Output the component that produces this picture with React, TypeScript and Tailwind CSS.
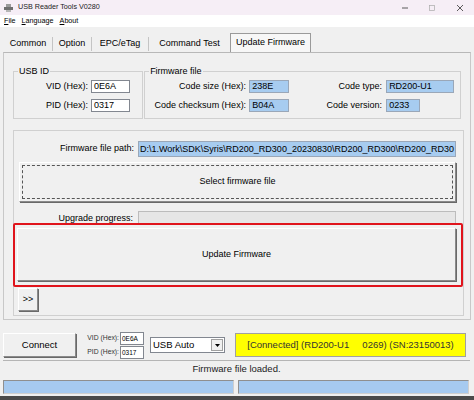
import React from 'react';

const field = 'h-[13px] border border-[#828790] bg-white px-[2px] text-[9px] leading-[11px] whitespace-nowrap overflow-hidden';
const blueField = 'h-[13px] border border-[#9aa7b8] bg-[#a7ccf0] px-[2px] text-[9px] leading-[11px] whitespace-nowrap overflow-hidden';
const winButton = 'flex items-center justify-center bg-[#f0f0f0] border border-t-white border-l-white border-r-[#8a8a8a] border-b-[#8a8a8a] shadow-[1px_1px_0_#696969]';

function Tab({ label, width }: { label: string; width: string }) {
  return (
    <div className={`${width} flex h-[14px] items-center justify-center border-r border-[#c4c4c4]`}>
      {label}
    </div>
  );
}

export default function App() {
  return (
    <div className="flex h-[400px] w-[474px] flex-col overflow-hidden bg-[#f0f0f0] font-['Liberation_Sans',Arial,sans-serif] text-[9px] text-black">
      {/* title bar */}
      <div className="flex h-[15px] items-center bg-[#f6eef6]">
        <svg className="ml-[4px] mr-[5px]" width="9" height="8" viewBox="0 0 9 8">
          <rect x="2" y="0" width="5" height="3" fill="#9a9a9a" />
          <rect x="0" y="3" width="9" height="3" fill="#6f6f6f" />
          <rect x="2" y="6" width="5" height="2" fill="#b5b5b5" />
        </svg>
        <span className="text-[7.2px] text-[#222]">USB Reader Tools V0280</span>
        <div className="flex-1" />
        <svg className="mr-[21px]" width="6" height="6" viewBox="0 0 6 6">
          <line x1="0" y1="3" x2="6" y2="3" stroke="#333" strokeWidth="0.8" />
        </svg>
        <svg className="mr-[22px]" width="6" height="6" viewBox="0 0 6 6">
          <rect x="0.5" y="0.5" width="5" height="5" fill="none" stroke="#aaa" strokeWidth="0.7" />
        </svg>
        <svg className="mr-[11px]" width="6" height="6" viewBox="0 0 6 6">
          <path d="M0 0 L6 6 M6 0 L0 6" stroke="#333" strokeWidth="0.8" />
        </svg>
      </div>

      {/* menu */}
      <div className="flex h-[12px] items-center gap-[6px] bg-white pl-[4px] text-[7.2px]">
        <span><u>F</u>ile</span>
        <span><u>L</u>anguage</span>
        <span><u>A</u>bout</span>
      </div>

      {/* tab strip */}
      <div className="mt-[6px] flex h-[19px] items-end pl-[4px]">
        <div className="flex h-[17px] items-center">
          <Tab label="Common" width="w-[49px]" />
          <Tab label="Option" width="w-[39px]" />
          <Tab label="EPC/eTag" width="w-[57px]" />
          <div className="flex h-full w-[81px] items-center justify-center">Command Test</div>
        </div>
        <div className="flex h-[19px] w-[81px] items-center justify-center border border-b-0 border-[#9a9a9a] bg-[#f7f7f7] text-[9px]">
          Update Firmware
        </div>
      </div>

      {/* tab page */}
      <div className="mx-[3px] h-[268px] w-[468px] border border-[#c8c8c8] border-t-[#b8b8b8] px-[9px] pt-[13px]">
        <div className="flex gap-[1px]">
          <fieldset className="h-[53px] w-[131px] border border-[#d0d0d0] px-0">
            <legend className="ml-[4px] px-[1px] leading-[11px]">USB ID</legend>
            <div className="mt-[3px] flex items-center">
              <span className="w-[77px] pr-[3px] text-right">VID (Hex):</span>
              <div className={`${field} w-[39px]`}>0E6A</div>
            </div>
            <div className="mt-[5px] flex items-center">
              <span className="w-[77px] pr-[3px] text-right">PID (Hex):</span>
              <div className={`${field} w-[39px]`}>0317</div>
            </div>
          </fieldset>
          <fieldset className="h-[53px] w-[319px] border border-[#d0d0d0] px-0">
            <legend className="ml-[4px] px-[1px] leading-[11px]">Firmware file</legend>
            <div className="mt-[3px] flex items-center">
              <span className="w-[104px] pr-[3px] text-right">Code size (Hex):</span>
              <div className={`${blueField} w-[40px]`}>238E</div>
              <span className="w-[97px] pr-[4px] text-right">Code type:</span>
              <div className={`${blueField} w-[68px]`}>RD200-U1</div>
            </div>
            <div className="mt-[5px] flex items-center">
              <span className="w-[104px] pr-[3px] text-right">Code checksum (Hex):</span>
              <div className={`${blueField} w-[40px]`}>B04A</div>
              <span className="w-[97px] pr-[4px] text-right">Code version:</span>
              <div className={`${blueField} w-[34px]`}>0233</div>
            </div>
          </fieldset>
        </div>

        <div className="relative mt-[11px] h-[186px] w-[451px] border border-[#d0d0d0] pt-[10px]">
          <div className="flex items-center">
            <span className="w-[124px] pr-[4px] text-right">Firmware file path:</span>
            <div className="h-[16px] w-[318px] overflow-hidden whitespace-nowrap border border-[#9aa7b8] bg-[#a7ccf0] px-[1px] leading-[14px]">
              D:\1.Work\SDK\Syris\RD200_RD300_20230830\RD200_RD300\RD200_RD30
            </div>
          </div>
          <div className={`${winButton} ml-[5px] mt-[5px] h-[40px] w-[437px]`}>
            <div className="flex h-[34px] w-[431px] items-center justify-center border border-dashed border-[#555]">
              Select firmware file
            </div>
          </div>
          <div className="mt-[9px] flex items-start">
            <span className="w-[123px] pr-[4px] pt-[2px] text-right leading-[11px]">Upgrade progress:</span>
            <div className="ml-[1px] h-[13px] w-[318px] border border-[#bcbcbc] bg-[#e6e6e6]" />
          </div>
          <div className={`${winButton} ml-[3px] mt-[4px] h-[53px] w-[439px]`}>Update Firmware</div>
          <div className={`${winButton} ml-[4px] mt-[7px] h-[23px] w-[20px]`}>&gt;&gt;</div>
          <div className="absolute left-[-1px] top-[92px] h-[64px] w-[450px] rounded-[2px] border-2 border-[#e0141c]" />
        </div>
      </div>

      {/* bottom controls */}
      <div className="mt-[13px] flex h-[24px] items-center">
        <div className={`${winButton} ml-[3px] h-[24px] w-[73px] text-[9.5px]`}>Connect</div>
        <div className="ml-[10px] flex flex-col gap-[1px]">
          <div className="flex items-center">
            <span className="w-[34px] pr-[1px] text-right text-[6.8px] text-[#333]">VID (Hex):</span>
            <div className="h-[13px] w-[24px] border border-[#828790] bg-white px-[1px] text-[6.5px] leading-[11px]">0E6A</div>
          </div>
          <div className="flex items-center">
            <span className="w-[34px] pr-[1px] text-right text-[6.8px] text-[#333]">PID (Hex):</span>
            <div className="h-[13px] w-[24px] border border-[#828790] bg-white px-[1px] text-[6.5px] leading-[11px]">0317</div>
          </div>
        </div>
        <div className="ml-[6px] flex h-[16px] w-[75px] items-center border border-[#828790] bg-white pl-[2px] text-[9.5px]">
          <span className="flex-1">USB Auto</span>
          <div className="mr-[1px] flex h-[12px] w-[12px] items-center justify-center border border-[#a0a0a0] bg-[#f0f0f0]">
            <svg width="5" height="3" viewBox="0 0 5 3">
              <path d="M0 0 L5 0 L2.5 3 Z" fill="#000" />
            </svg>
          </div>
        </div>
        <div className="ml-[10px] flex h-[24px] w-[231px] items-center justify-center whitespace-pre border border-[#a0a0a0] bg-[#ffff00] text-[9.5px] text-[#333]">
          [Connected] (RD200-U1     0269) (SN:23150013)
        </div>
      </div>

      {/* status */}
      <div className="mx-[3px] mt-[3px] flex h-[17px] w-[467px] items-center justify-center border-t border-[#b5b5b5] bg-[#f0f0f0] text-[9.5px] text-[#222]">
        Firmware file loaded.
      </div>

      <div className="mt-[3px] flex gap-[4px] pl-[3px]">
        <div className="h-[14px] w-[231px] border border-[#8f8f8f] border-b-[#cfcfcf] border-r-[#cfcfcf] bg-[#a6caf0]" />
        <div className="h-[14px] w-[231px] border border-[#8f8f8f] border-b-[#cfcfcf] border-r-[#cfcfcf] bg-[#a6caf0]" />
      </div>
      <div className="mt-[2px] flex-1 bg-[#4a4a4a]" />
    </div>
  );
}
